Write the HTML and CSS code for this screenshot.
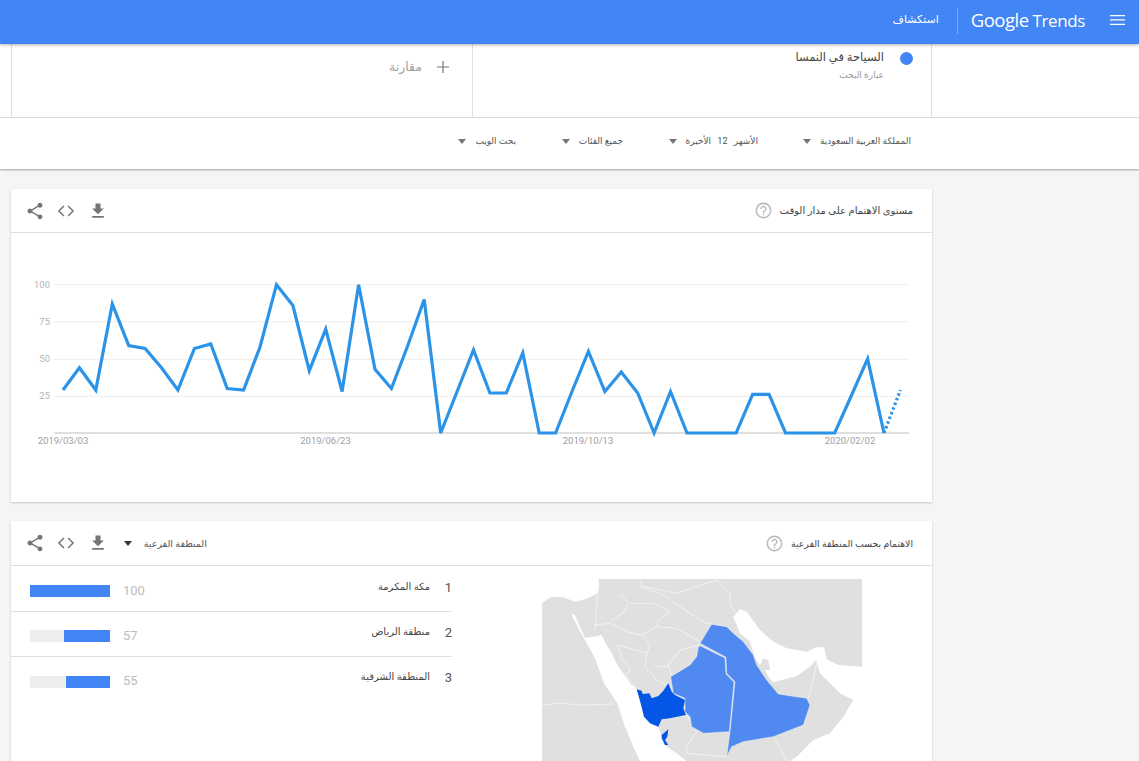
FILE: index.html
```html
<!DOCTYPE html>
<html lang="ar" dir="rtl">
<head>
<meta charset="utf-8">
<title>Google Trends</title>
<link rel="stylesheet" href="styles.css">
</head>
<body>
<header class="topbar">
  <svg class="menu-icon" viewBox="0 0 15 10"><path d="M0 0h15v1.3H0zM0 4.3h15v1.3H0zM0 8.7h15V10H0z"/></svg>
  <div class="logo" dir="ltr"><span class="logo-g">Google</span> <span class="logo-t">Trends</span></div>
  <div class="top-divider"></div>
  <a class="explore">استكشاف</a>
</header>

<section class="compare">
  <div class="compare-cell term-cell">
    <span class="dot"></span>
    <div class="term-text">
      <div class="term-name">السياحة في النمسا</div>
      <div class="term-sub">عبارة البحث</div>
    </div>
  </div>
  <div class="compare-cell add-cell">
    <svg class="plus" viewBox="0 0 12 12"><path d="M5.4 0h1.2v5.4H12v1.2H6.6V12H5.4V6.6H0V5.4h5.4z"/></svg>
    <span class="add-label">مقارنة</span>
  </div>
</section>

<nav class="filters">
  <div class="filter"><span>المملكة العربية السعودية</span><i class="caret"></i></div>
  <div class="filter"><span class="filter-wide">الأشهر 12 الأخيرة</span><i class="caret"></i></div>
  <div class="filter"><span>جميع الفئات</span><i class="caret"></i></div>
  <div class="filter"><span>بحث الويب</span><i class="caret"></i></div>
</nav>

<main class="content">
  <section class="card card-time">
    <div class="card-head">
      <h2 class="card-title">مستوى الاهتمام على مدار الوقت</h2>
      <svg class="help" viewBox="0 0 24 24"><path d="M11 18h2v-2h-2v2zm1-16C6.48 2 2 6.48 2 12s4.48 10 10 10 10-4.48 10-10S17.52 2 12 2zm0 18c-4.41 0-8-3.59-8-8s3.59-8 8-8 8 3.59 8 8-3.59 8-8 8zm0-14c-2.21 0-4 1.79-4 4h2c0-1.1.9-2 2-2s2 .9 2 2c0 2-3 1.75-3 5h2c0-2.25 3-2.5 3-5 0-2.21-1.79-4-4-4z"/></svg>
      <div class="tools">
        <svg class="tool" viewBox="0 0 24 24"><path d="M5 9h4V3h6v6h4l-7 7zM5 18h14v2H5z"/></svg>
        <svg class="tool tool-code" viewBox="0 0 24 24"><path d="M9.5 6 3.5 12l6 6M14.5 6l6 6-6 6"/></svg>
        <svg class="tool" viewBox="0 0 24 24"><path d="M18 16.08c-.76 0-1.44.3-1.96.77L8.91 12.7c.05-.23.09-.46.09-.7s-.04-.47-.09-.7l7.05-4.11c.54.5 1.25.81 2.04.81 1.66 0 3-1.34 3-3s-1.34-3-3-3-3 1.34-3 3c0 .24.04.47.09.7L8.04 9.81C7.5 9.31 6.79 9 6 9c-1.66 0-3 1.34-3 3s1.34 3 3 3c.79 0 1.5-.31 2.04-.81l7.12 4.16c-.05.21-.08.43-.08.65 0 1.61 1.31 2.92 2.92 2.92 1.61 0 2.92-1.31 2.92-2.92s-1.31-2.92-2.92-2.92z"/></svg>
      </div>
    </div>
    <svg class="chart" viewBox="11 233 921 269">
      <g class="grid">
        <path d="M54 284.7H909M54 321.7H909M54 359.3H909M54 396.3H909"/>
      </g>
      <path class="baseline" d="M54 433H909"/>
      <g class="axis-y">
        <text x="50" y="288">100</text>
        <text x="50" y="325">75</text>
        <text x="50" y="362">50</text>
        <text x="50" y="399">25</text>
      </g>
      <g class="axis-x">
        <text x="63" y="444">2019/03/03</text>
        <text x="325.5" y="444">2019/06/23</text>
        <text x="588" y="444">2019/10/13</text>
        <text x="850" y="444">2020/02/02</text>
      </g>
      <polyline class="line" points="63,390 79.4,367.7 95.8,390 112.3,304 128.7,345.5 145.1,348.5 161.5,367.7 177.9,390 194.4,348.5 210.8,344 227.2,388.5 243.6,390 260,347 276.5,284.7 292.9,305.5 309.3,370.7 325.7,329.2 342.1,391.5 358.6,284.7 375,369.2 391.4,388.5 407.8,345.5 424.2,299.5 440.7,433 457.1,391.5 473.5,350 489.9,393 506.3,393 522.8,353 539.2,433 555.6,433 572,391.5 588.4,351.4 604.9,391.5 621.3,372 637.7,393 654.1,433 670.5,391.5 687,433 736.2,433 752.6,394.4 769.1,394.4 785.5,433 834.7,433 851.2,396 867.6,358.8 884,433"/>
      <path class="line line-dots" d="M884 433 900.4 390"/>
    </svg>
  </section>

  <section class="card card-region">
    <div class="card-head card-head-region">
      <h2 class="card-title card-title-region">الاهتمام بحسب المنطقة الفرعية</h2>
      <svg class="help" viewBox="0 0 24 24"><path d="M11 18h2v-2h-2v2zm1-16C6.48 2 2 6.48 2 12s4.48 10 10 10 10-4.48 10-10S17.52 2 12 2zm0 18c-4.41 0-8-3.59-8-8s3.59-8 8-8 8 3.59 8 8-3.59 8-8 8zm0-14c-2.21 0-4 1.79-4 4h2c0-1.1.9-2 2-2s2 .9 2 2c0 2-3 1.75-3 5h2c0-2.25 3-2.5 3-5 0-2.21-1.79-4-4-4z"/></svg>
      <div class="tools">
        <div class="region-select"><span>المنطقة الفرعية</span><i class="caret caret-dark"></i></div>
        <svg class="tool" viewBox="0 0 24 24"><path d="M5 9h4V3h6v6h4l-7 7zM5 18h14v2H5z"/></svg>
        <svg class="tool tool-code" viewBox="0 0 24 24"><path d="M9.5 6 3.5 12l6 6M14.5 6l6 6-6 6"/></svg>
        <svg class="tool" viewBox="0 0 24 24"><path d="M18 16.08c-.76 0-1.44.3-1.96.77L8.91 12.7c.05-.23.09-.46.09-.7s-.04-.47-.09-.7l7.05-4.11c.54.5 1.25.81 2.04.81 1.66 0 3-1.34 3-3s-1.34-3-3-3-3 1.34-3 3c0 .24.04.47.09.7L8.04 9.81C7.5 9.31 6.79 9 6 9c-1.66 0-3 1.34-3 3s1.34 3 3 3c.79 0 1.5-.31 2.04-.81l7.12 4.16c-.05.21-.08.43-.08.65 0 1.61 1.31 2.92 2.92 2.92 1.61 0 2.92-1.31 2.92-2.92s-1.31-2.92-2.92-2.92z"/></svg>
      </div>
    </div>
    <div class="region-body">
      <div class="map-wrap">
        <svg class="map" viewBox="0 0 1020 573">
          <rect class="land" x="36" y="27" width="960" height="546"/>
          <g class="sea">
            <path d="M36 27H205L208 50 200 72 165 88 135 95 100 82 65 80 36 98Z"/>
            <path d="M125 135 133 132 150 170 165 203 190 200 215 195 230 225 245 250 262 285 280 310 300 340 320 358 332 400 340 430 360 460 385 470 395 500 410 530 440 550 470 573H330L310 530 285 470 262 400 222 340 195 265 165 210 145 175Z"/>
            <path d="M610 140 630 118 650 125 690 180 730 215 770 235 830 245 860 232 882 232 890 268 925 285 996 290V573H780L800 560 850 510 900 490 940 440 970 390 930 370 870 310 858 270 840 290 800 318 730 337 718 325 705 300 720 300 715 270 700 265 690 285 675 265 660 215 630 190Z"/>
          </g>
          <g class="borders">
            <path d="M205 50 200 110 195 180"/>
            <path d="M330 50 400 75 480 130 530 160 590 170"/>
            <path d="M330 30 340 50 440 70 560 30 600 70 600 100 615 130"/>
            <path d="M195 165 240 160 290 185 335 195 380 170 440 175 510 215"/>
            <path d="M270 75 300 100 370 100 420 125 385 150 380 170"/>
            <path d="M295 100 285 125 240 155"/>
            <path d="M340 195 360 225 350 250 300 235 262 225 275 265 300 295 290 320 320 355"/>
            <path d="M350 250 345 290 380 330 410 345"/>
            <path d="M510 225 450 240 415 285 425 320"/>
            <path d="M415 290 380 290"/>
            <path d="M36 405 90 400 160 405 250 402"/>
            <path d="M420 445 470 435 500 485 470 530 470 550 590 560"/>
            <path d="M730 500 770 573"/>
            <path d="M860 280 850 330 835 385"/>
          </g>
          <path class="reg-mid" d="M545 163 590 170 610 190 640 215 670 255 680 285 710 330 745 372 830 385 840 405 820 465 730 500 640 515 605 530 590 560 600 485 615 335 590 310 588 262 510 220Z"/>
          <path class="reg-mid" d="M510 227 585 264 588 312 612 337 598 485 520 490 485 470 480 440 465 425 465 385 430 370 422 320 480 285 500 260 505 232Z"/>
          <path class="reg-high" d="M320 358 335 362 338 372 358 370 365 385 385 378 400 362 415 340 425 365 435 375 465 390 460 415 468 435 420 445 395 448 385 470 360 460 342 440 332 400Z"/>
          <path class="reg-high" d="M395 495 415 478 412 500 405 510 415 525 405 525 395 505Z"/>
        </svg>
      </div>
      <ol class="rank-list">
        <li class="rank-row">
          <span class="rank">1</span><span class="rank-name">مكة المكرمة</span><span class="rank-value">100</span>
          <div class="bar"><div class="bar-fill" style="width:100%"></div></div>
        </li>
        <li class="rank-row">
          <span class="rank">2</span><span class="rank-name">منطقة الرياض</span><span class="rank-value">57</span>
          <div class="bar"><div class="bar-fill" style="width:57%"></div></div>
        </li>
        <li class="rank-row">
          <span class="rank">3</span><span class="rank-name">المنطقة الشرقية</span><span class="rank-value">55</span>
          <div class="bar"><div class="bar-fill" style="width:55%"></div></div>
        </li>
      </ol>
    </div>
  </section>
</main>
</body>
</html>
```
FILE: styles.css
```css
* { box-sizing: border-box; }
html, body {
  margin: 0;
  height: 761px;
  overflow: hidden;
  background: #f5f5f5;
  font-family: Roboto, "DejaVu Sans", sans-serif;
  color: #333;
}
.topbar {
  position: relative;
  z-index: 2;
  height: 44px;
  background: #4285f4;
  box-shadow: 0 1px 3px rgba(0,0,0,.3);
  display: flex;
  align-items: center;
  padding-right: 14px;
  color: #fff;
}
.menu-icon { width: 15px; height: 10px; fill: #fff; margin-top: -4px; }
.logo {
  margin: -6px 25px 0 0;
  font-family: "Open Sans", sans-serif;
  font-size: 17px;
  letter-spacing: -.4px;
  white-space: nowrap;
}
.logo-g { font-size: 18.5px; letter-spacing: -.5px; }
.logo-t { font-weight: 400; }
.top-divider { width: 1px; height: 26px; background: rgba(255,255,255,.3); margin: -2px 13px 0 0; }
.explore { margin: -6px 18px 0 0; font-size: 11px; }

.compare {
  height: 74px;
  background: #fff;
  border-bottom: 1px solid #e0e0e0;
  display: flex;
  padding: 0 207px 0 11px;
}
.compare-cell { height: 73px; display: flex; }
.term-cell {
  width: 460px;
  border-left: 1px solid #e0e0e0;
  border-right: 1px solid #e0e0e0;
  padding: 7px 18px 0 0;
}
.dot { width: 13px; height: 13px; border-radius: 50%; background: #4285f4; margin: 1px 0 0 16px; flex: none; }
.term-name { font-size: 11.5px; line-height: 12px; color: #444; }
.term-sub { font-size: 9px; line-height: 10px; margin-top: 7px; color: #999; }
.add-cell {
  flex: 1;
  border-left: 1px solid #e0e0e0;
  padding: 17px 23px 0 0;
  align-items: flex-start;
}
.plus { width: 12px; height: 12px; fill: #757575; margin: 0 0 0 15px; }
.add-label { font-size: 12.5px; line-height: 12px; color: #9e9e9e; }

.filters {
  height: 51px;
  background: #fff;
  box-shadow: 0 1px 2px rgba(0,0,0,.35);
  display: grid;
  grid-template-columns: 153px 135px 107px auto;
  align-items: center;
  padding: 0 228px 5px 0;
  font-size: 9px;
  color: #555;
}
.filter { display: flex; align-items: center; gap: 9px; white-space: nowrap; }
.filter-wide { word-spacing: 4px; }
.caret {
  width: 0; height: 0;
  border-left: 4px solid transparent;
  border-right: 4px solid transparent;
  border-top: 5px solid #757575;
}
.caret-dark { border-top-color: #333; }

.content { padding: 20px 207px 0 11px; display: flex; flex-direction: column; gap: 19px; }
.card { background: #fff; box-shadow: 0 1px 2px rgba(0,0,0,.2); }
.card-time { height: 313px; }
.card-region { height: 400px; }
.card-head {
  height: 44px;
  border-bottom: 1px solid #e0e0e0;
  display: flex;
  align-items: center;
  padding: 0 19px 0 13.5px;
}
.card-head-region { height: 45px; }
.card-title { margin: 0; font-size: 10px; font-weight: 400; color: #444; white-space: nowrap; }
.card-title-region { font-size: 9.3px; }
.help { width: 19px; height: 19px; fill: #bdbdbd; margin-right: 7px; flex: none; }
.tools { margin-right: auto; display: flex; align-items: center; gap: 11.75px; }
.tool { width: 20px; height: 20px; fill: #757575; }
.tool-code { fill: none; stroke: #757575; stroke-width: 1.8; }
.region-select { display: flex; align-items: center; gap: 12px; font-size: 9.5px; color: #555; white-space: nowrap; margin-left: 4px; }

.chart { display: block; width: 921px; height: 269px; direction: ltr; }
.grid path { stroke: #eee; stroke-width: 1; fill: none; }
.baseline { stroke: #d5d5d5; stroke-width: 1.5; fill: none; }
.axis-y text { font: 9.5px Roboto, sans-serif; fill: #b5b5b5; text-anchor: end; }
.axis-x text { font: 9.5px Roboto, sans-serif; fill: #9e9e9e; text-anchor: middle; }
.line { fill: none; stroke: #2b93e8; stroke-width: 3.2; stroke-linejoin: miter; }
.line-dots { stroke-dasharray: 2.5 2.5; }

.region-body { display: flex; }
.map-wrap { width: 460px; padding: 4px 62px 0 58px; flex: none; }
.map { display: block; width: 340px; height: 191px; }
.land { fill: #e0e0e0; }
.sea path { fill: #fff; }
.borders path { fill: none; stroke: #fafafa; stroke-width: 2; }
.reg-mid { fill: #5089ef; stroke: #f4f4f4; stroke-width: 1.5; }
.reg-high { fill: #0457e6; }

.rank-list { list-style: none; margin: 0 20px 0 0; padding: 1px 0 0; width: 441px; flex: none; }
.rank-row {
  height: 45px;
  border-bottom: 1px solid #e0e0e0;
  display: flex;
  align-items: center;
  padding: 4px 0 0 19px;
}
.rank-row:last-child { border-bottom: 0; }
.rank { width: 22px; font-size: 13px; color: #555; margin-top: -8px; }
.rank-name { flex: 1; font-size: 10px; color: #444; margin-top: -10px; }
.rank-value { font-size: 13px; color: #bdbdbd; margin: -2px 0 0 13px; }
.bar { width: 80px; height: 12px; background: #eee; display: flex; justify-content: flex-start; }
.bar-fill { height: 100%; background: #4285f4; }
```
